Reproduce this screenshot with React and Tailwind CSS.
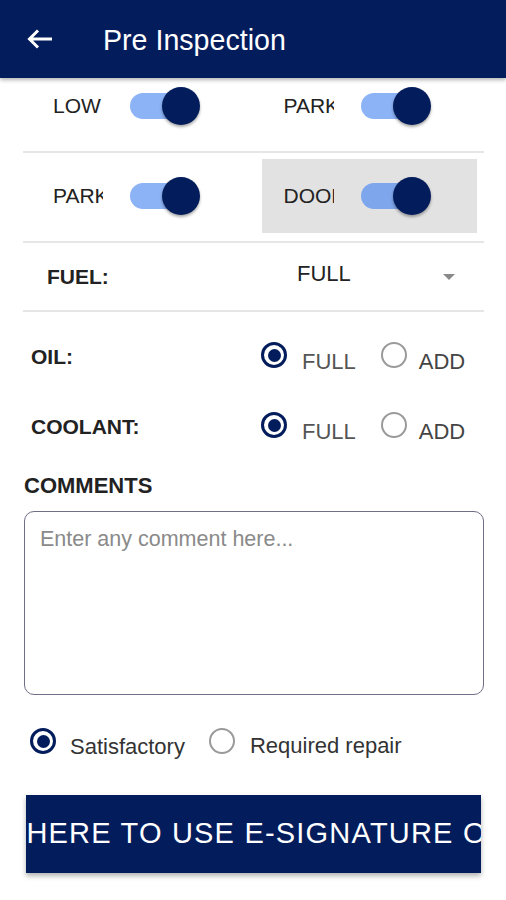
const navy = 'bg-[#031c5c]';

const Toggle = ({ label, dark }) => (
  <div className="flex items-center h-full">
    <span className="w-[50px] overflow-hidden whitespace-nowrap text-[21px] text-[#222]">{label}</span>
    <div className="relative ml-[27px] w-[70px] h-[38px]">
      <div className={`absolute left-0 top-[6px] w-[60px] h-[26px] rounded-full ${dark ? 'bg-[#7ea6ec]' : 'bg-[#8cb3f6]'}`}></div>
      <div className="absolute right-0 top-0 w-[38px] h-[38px] rounded-full bg-[#031c5c] shadow-[0_2px_3px_rgba(0,0,0,0.35)]"></div>
    </div>
  </div>
);

const Radio = ({ checked }) => (
  <span
    className={`w-[26px] h-[26px] rounded-full flex items-center justify-center shrink-0 ${
      checked ? 'border-[3px] border-[#031c5c]' : 'border-2 border-[#9a9a9a]'
    }`}
  >
    {checked && <span className="w-[13px] h-[13px] rounded-full bg-[#031c5c]"></span>}
  </span>
);

const LevelRow = ({ label }) => (
  <div className="flex items-center h-[70px]">
    <span className="w-[238px] pl-[8px] pt-[3px] text-[21px] font-bold text-[#222]">{label}</span>
    <div className="flex items-center">
      <Radio checked />
      <span className="ml-[15px] mt-[12px] text-[22px] text-[#555]">FULL</span>
      <span className="ml-[25px]"><Radio /></span>
      <span className="ml-[12px] mt-[12px] text-[22px] text-[#444]">ADD</span>
    </div>
  </div>
);

export default function App() {
  return (
    <div className="min-h-screen bg-white font-['Liberation_Sans',Arial,sans-serif]">
      {/* Header */}
      <div className={`h-[78px] ${navy} flex items-center shadow-[0_2px_4px_rgba(0,0,0,0.3)] relative z-10`}>
        <svg width="26" height="20" viewBox="0 0 26 20" className="ml-[27px]">
          <path d="M25 10H2.5 M11 1.5 L2.5 10 L11 18.5" fill="none" stroke="white" strokeWidth="3" />
        </svg>
        <h1 className="ml-[50px] mt-[2px] text-[28.6px] text-white">Pre Inspection</h1>
      </div>

      <div className="pl-[23px] pr-[22px]">
        {/* Toggle row 1 */}
        <div className="grid grid-cols-2 h-[73px] pt-[9px]">
          <div className="mx-[8px] px-[22px] h-[38px]"><Toggle label="LOW" /></div>
          <div className="mx-[8px] px-[22px] h-[38px]"><Toggle label="PARKING" /></div>
        </div>
        <div className="h-[2px] bg-[#e6e6e6]"></div>

        {/* Toggle row 2 */}
        <div className="grid grid-cols-2 pt-[6px] pb-[8px]">
          <div className="mx-[8px] px-[22px] h-[74px]"><Toggle label="PARKING" /></div>
          <div className="ml-[8px] mr-[7px] px-[22px] h-[74px] bg-[#e2e2e2]"><Toggle label="DOOR" dark /></div>
        </div>
        <div className="h-[2px] bg-[#e6e6e6]"></div>

        {/* Fuel */}
        <div className="flex items-center h-[67px]">
          <span className="w-[274px] pl-[24px] text-[21px] font-bold text-[#222]">FUEL:</span>
          <div className="flex-1 flex items-center justify-between pr-[29px]">
            <span className="text-[22px] text-[#222] -mt-[6px]">FULL</span>
            <span className="w-0 h-0 border-l-[6px] border-r-[6px] border-t-[6px] border-l-transparent border-r-transparent border-t-[#8a8a8a]"></span>
          </div>
        </div>
        <div className="h-[2px] bg-[#e6e6e6]"></div>

        {/* Oil / coolant */}
        <div className="mt-[8px]">
          <LevelRow label="OIL:" />
          <LevelRow label="COOLANT:" />
        </div>

        {/* Comments */}
        <div className="mt-[13px] text-[22px] leading-[26px] font-bold text-[#222] pl-[1px]">COMMENTS</div>
        <textarea
          placeholder="Enter any comment here..."
          className="mt-[12px] ml-[1px] w-[460px] h-[184px] block resize-none rounded-[10px] border-[1.5px] border-[#6e6e86] px-[15px] py-[14px] text-[21.5px] leading-[26px] placeholder:text-[#8a8a8a] outline-none"
        ></textarea>

        {/* Status */}
        <div className="mt-[26px] h-[40px] flex items-center pl-[7px]">
          <Radio checked />
          <span className="ml-[14px] mt-[11px] text-[22px] text-[#333]">Satisfactory</span>
          <span className="ml-[24px]"><Radio /></span>
          <span className="ml-[15px] mt-[9px] text-[22px] text-[#333]">Required repair</span>
        </div>

        {/* E-signature button */}
        <button
          className={`mt-[34px] ml-[3px] w-[455px] h-[78px] ${navy} flex items-center justify-center overflow-hidden shadow-[0_3px_5px_rgba(0,0,0,0.3)]`}
        >
          <span className="whitespace-nowrap text-[29px] tracking-[1.2px] text-white">CLICK HERE TO USE E-SIGNATURE OPTION</span>
        </button>
      </div>
    </div>
  );
}
